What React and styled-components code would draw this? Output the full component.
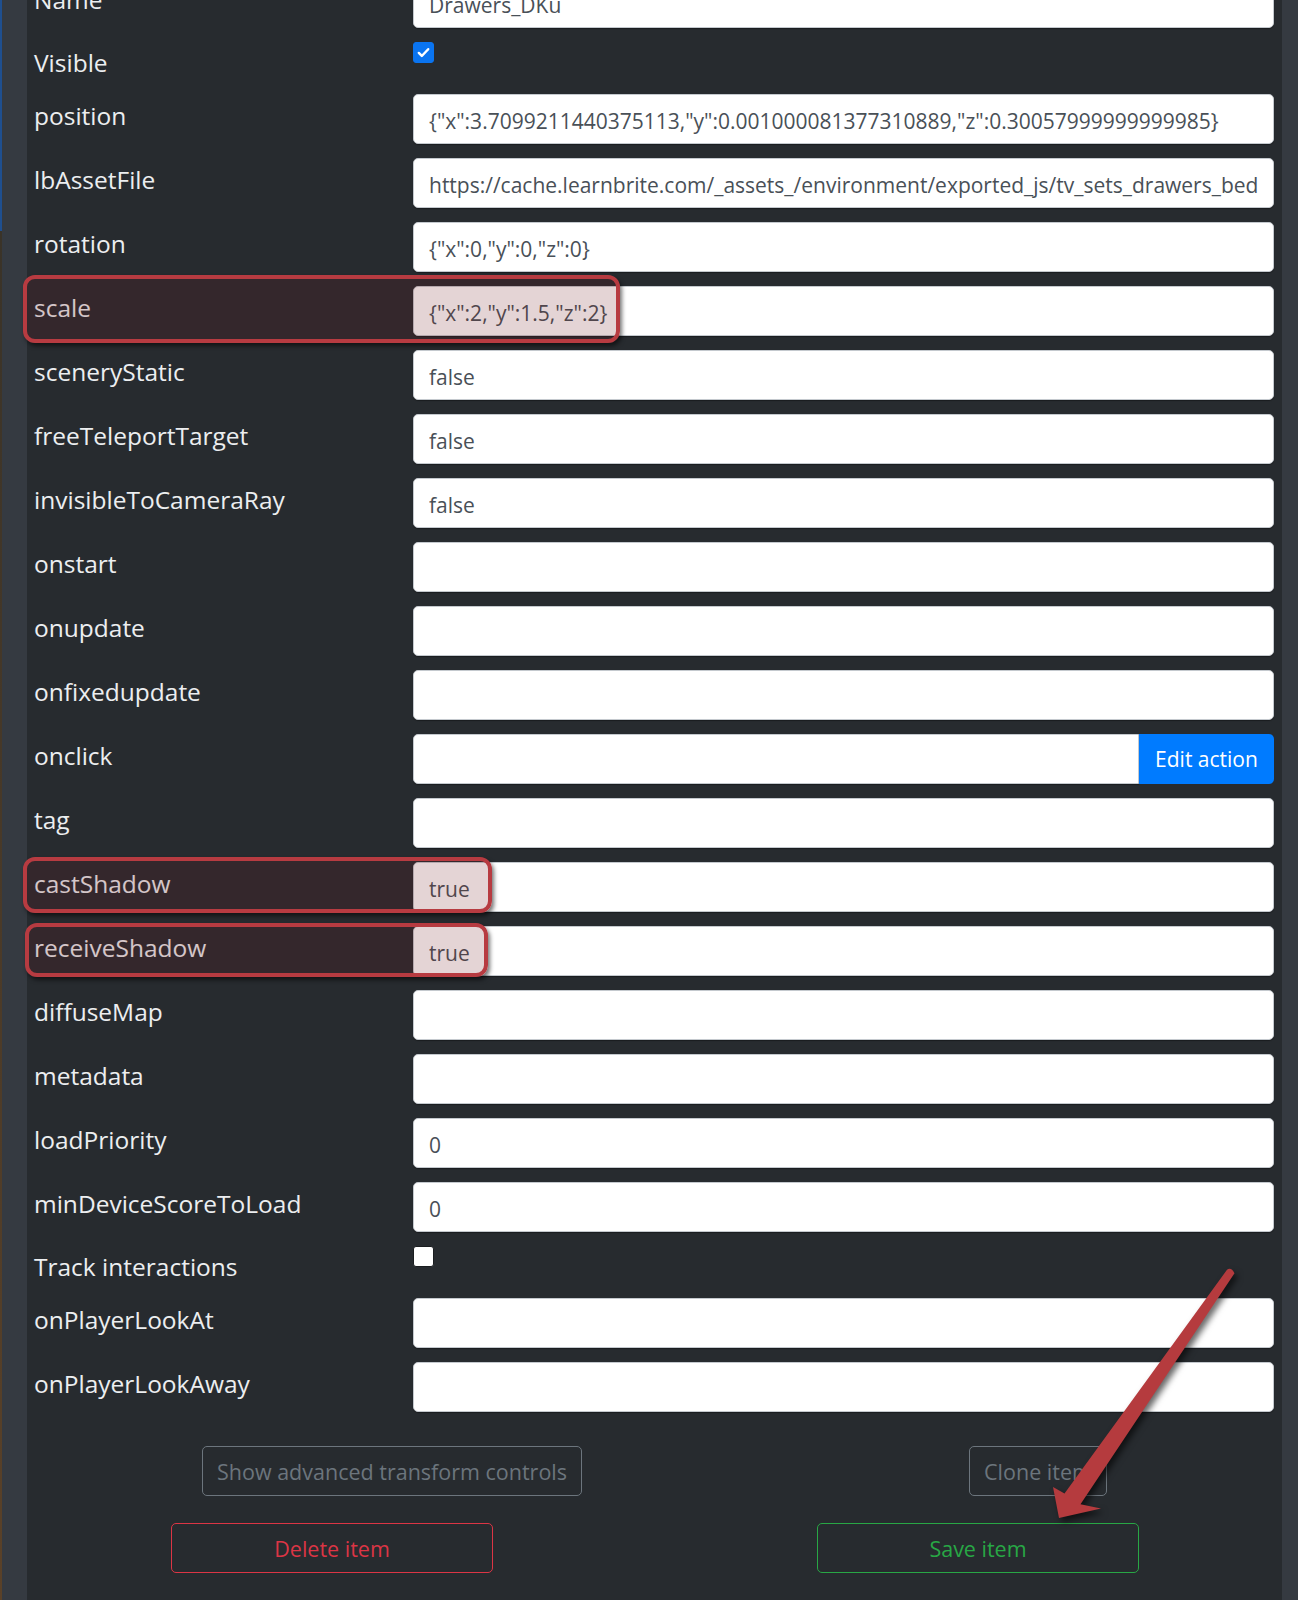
import React from 'react';
import styled, { createGlobalStyle } from 'styled-components';

const GlobalStyle = createGlobalStyle`
  html, body {
    margin: 0;
    padding: 0;
    background-color: #272b2f;
  }

  body {
    font-family: 'Open Sans', 'Noto Sans', sans-serif;
    overflow: hidden;
  }
`;

const Page = styled.div`
  position: relative;
  display: flex;
  width: 1298px;
  height: 1600px;
  overflow: hidden;
  background-color: #272b2f;
`;

const LeftRail = styled.div`
  width: 25px;
  flex-shrink: 0;
  background-color: #353a41;
  border-left: 2px solid #4a3a2a;
  border-image: linear-gradient(to bottom, #1f4f8f 0, #1f4f8f 232px, #3a3328 232px, #5a4128 100%) 1;
`;

const RightRail = styled.div`
  width: 16px;
  flex-shrink: 0;
  background-color: #353a41;
`;

const Main = styled.main`
  flex: 1;
  padding: 0 8px 0 7px;
`;

const Form = styled.form`
  margin-top: -22px;
`;

const Row = styled.div`
  position: relative;
  display: grid;
  grid-template-columns: 379px 1fr;
  align-items: start;
  height: ${(p) => (p.$check ? '38px' : '50px')};
  margin-bottom: 14px;
`;

const Label = styled.label`
  padding-top: ${(p) => (p.$check ? '3px' : '4px')};
  font-size: 24.5px;
  line-height: 1.5;
  color: #eceef0;
  white-space: nowrap;
`;

const Input = styled.input`
  box-sizing: border-box;
  width: 100%;
  height: 50px;
  padding: 4px 15px 0;
  border: 1px solid #c4c9ce;
  border-radius: ${(p) => (p.$grouped ? '5px 0 0 5px' : '5px')};
  background-color: #fff;
  box-shadow: 0 1px 1px rgba(0, 0, 0, 0.35);
  font-family: inherit;
  font-size: 21px;
  color: #495057;
  outline: none;
`;

const InputGroup = styled.div`
  display: flex;
`;

const AppendButton = styled.button`
  flex-shrink: 0;
  width: 135px;
  height: 50px;
  border: 0;
  border-radius: 0 5px 5px 0;
  background-color: #007bff;
  color: #fff;
  font-family: inherit;
  font-size: 21px;
`;

const CheckBox = styled.span`
  box-sizing: border-box;
  display: flex;
  align-items: center;
  justify-content: center;
  width: 21px;
  height: 21px;
  border-radius: 3px;
  background-color: ${(p) => (p.$checked ? '#0a74f0' : '#ffffff')};
  border: 1px solid ${(p) => (p.$checked ? '#0a74f0' : '#1a1d20')};
`;

const Highlight = styled.div`
  position: absolute;
  pointer-events: none;
  box-sizing: border-box;
  border: 4px solid #b73b41;
  border-radius: 12px;
  background-color: rgba(110, 28, 32, 0.19);
  box-shadow: 2px 3px 4px rgba(0, 0, 0, 0.55);
`;

const Footer = styled.div`
  display: flex;
  flex-direction: column;
  gap: 27px;
  margin-top: 34px;
`;

const ButtonRow = styled.div`
  display: flex;
  gap: ${(p) => p.$gap}px;
  margin-left: ${(p) => p.$offset}px;
`;

const OutlineButton = styled.button`
  box-sizing: border-box;
  width: ${(p) => p.$width}px;
  height: 50px;
  padding: 0;
  border: 1.3px solid ${(p) => p.$color};
  border-radius: 5px;
  background: transparent;
  color: ${(p) => p.$color};
  font-family: inherit;
  font-size: 21.5px;
  white-space: nowrap;
  overflow: hidden;
`;

const Arrow = styled.svg`
  position: absolute;
  left: 1040px;
  top: 1262px;
  width: 200px;
  height: 270px;
  pointer-events: none;
  filter: drop-shadow(3px 4px 3px rgba(0, 0, 0, 0.6));
`;

const fields = [
  { label: 'Name', value: 'Drawers_DKu' },
  { label: 'Visible', check: true, checked: true },
  { label: 'position', value: '{"x":3.7099211440375113,"y":0.001000081377310889,"z":0.30057999999999985}' },
  { label: 'lbAssetFile', value: 'https://cache.learnbrite.com/_assets_/environment/exported_js/tv_sets_drawers_bedroom.js' },
  { label: 'rotation', value: '{"x":0,"y":0,"z":0}' },
  { label: 'scale', value: '{"x":2,"y":1.5,"z":2}', mark: { top: -11, left: -11, width: 597, height: 68 } },
  { label: 'sceneryStatic', value: 'false' },
  { label: 'freeTeleportTarget', value: 'false' },
  { label: 'invisibleToCameraRay', value: 'false' },
  { label: 'onstart', value: '' },
  { label: 'onupdate', value: '' },
  { label: 'onfixedupdate', value: '' },
  { label: 'onclick', value: '', action: 'Edit action' },
  { label: 'tag', value: '' },
  { label: 'castShadow', value: 'true', mark: { top: -5, left: -11, width: 469, height: 56 } },
  { label: 'receiveShadow', value: 'true', mark: { top: -3, left: -9, width: 463, height: 54 } },
  { label: 'diffuseMap', value: '' },
  { label: 'metadata', value: '' },
  { label: 'loadPriority', value: '0' },
  { label: 'minDeviceScoreToLoad', value: '0' },
  { label: 'Track interactions', check: true, checked: false },
  { label: 'onPlayerLookAt', value: '' },
  { label: 'onPlayerLookAway', value: '' },
];

const Check = ({ checked }) => (
  <CheckBox $checked={checked}>
    {checked && (
      <svg width="15" height="15" viewBox="0 0 16 16">
        <path d="M3 8.5l3.2 3.2L13 4.5" fill="none" stroke="#fff" strokeWidth="2.6" strokeLinecap="round" strokeLinejoin="round" />
      </svg>
    )}
  </CheckBox>
);

const Field = ({ field }) => {
  let control;
  if (field.check) {
    control = <Check checked={field.checked} />;
  } else if (field.action) {
    control = (
      <InputGroup>
        <Input $grouped defaultValue={field.value} />
        <AppendButton type="button">{field.action}</AppendButton>
      </InputGroup>
    );
  } else {
    control = <Input defaultValue={field.value} />;
  }

  return (
    <Row $check={field.check}>
      <Label $check={field.check}>{field.label}</Label>
      {control}
      {field.mark && (
        <Highlight
          style={{
            top: field.mark.top,
            left: field.mark.left,
            width: field.mark.width,
            height: field.mark.height,
          }}
        />
      )}
    </Row>
  );
};

export default function App() {
  return (
    <>
      <GlobalStyle />
      <Page>
        <LeftRail />
        <Main>
          <Form onSubmit={(e) => e.preventDefault()}>
            {fields.map((f) => (
              <Field key={f.label} field={f} />
            ))}
          </Form>
          <Footer>
            <ButtonRow $offset={168} $gap={387}>
              <OutlineButton type="button" $width={380} $color="#6c757d">
                Show advanced transform controls
              </OutlineButton>
              <OutlineButton type="button" $width={138} $color="#6c757d">
                Clone item
              </OutlineButton>
            </ButtonRow>
            <ButtonRow $offset={137} $gap={324}>
              <OutlineButton type="button" $width={322} $color="#dc3545">
                Delete item
              </OutlineButton>
              <OutlineButton type="button" $width={322} $color="#28a745">
                Save item
              </OutlineButton>
            </ButtonRow>
          </Footer>
        </Main>
        <RightRail />
        <Arrow viewBox="1040 1262 200 270">
          <path
            d="M1227 1269.8 Q1231 1266.5 1234.5 1273.2 L1080.5 1504.2 L1101 1508.5 L1059 1518 L1053 1487 L1064.5 1493.4 Z"
            fill="#b53b3e"
          />
        </Arrow>
      </Page>
    </>
  );
}
